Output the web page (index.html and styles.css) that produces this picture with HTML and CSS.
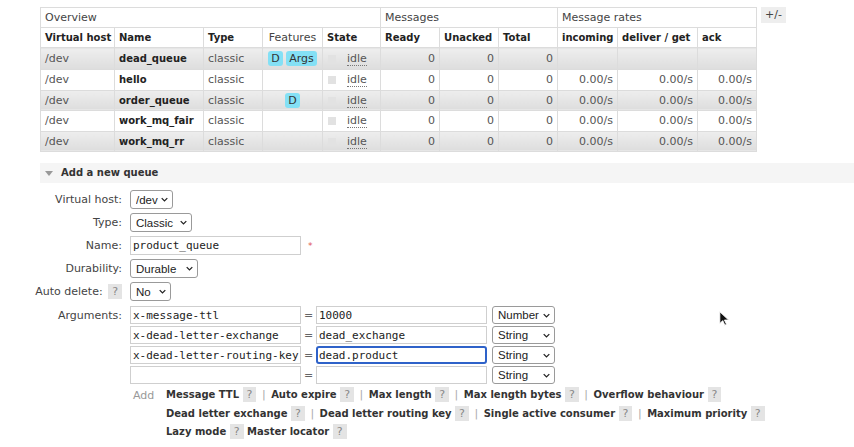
FILE: index.html
```html
<!DOCTYPE html>
<html>
<head>
<meta charset="utf-8">
<link rel="stylesheet" href="styles.css">
</head>
<body>
<div class="top">
  <table class="queues">
    <colgroup>
      <col style="width:74px"><col style="width:89px"><col style="width:59px"><col style="width:60px"><col style="width:58px">
      <col style="width:59px"><col style="width:59px"><col style="width:59px">
      <col style="width:60px"><col style="width:80px"><col style="width:59px">
    </colgroup>
    <thead>
      <tr class="group"><th colspan="5">Overview</th><th colspan="3">Messages</th><th colspan="3">Message rates</th></tr>
      <tr class="cols"><th>Virtual host</th><th>Name</th><th>Type</th><th class="feat-h">Features</th><th>State</th><th>Ready</th><th>Unacked</th><th>Total</th><th>incoming</th><th>deliver / get</th><th>ack</th></tr>
    </thead>
    <tbody>
      <tr class="alt tall"><td>/dev</td><td class="name">dead_queue</td><td>classic</td><td class="feat"><span class="badge">D</span> <span class="badge">Args</span></td><td class="state"><span class="box"></span><span class="idle">idle</span></td><td class="num">0</td><td class="num">0</td><td class="num">0</td><td></td><td></td><td></td></tr>
      <tr><td>/dev</td><td class="name">hello</td><td>classic</td><td class="feat"></td><td class="state"><span class="box"></span><span class="idle">idle</span></td><td class="num">0</td><td class="num">0</td><td class="num">0</td><td class="num">0.00/s</td><td class="num">0.00/s</td><td class="num">0.00/s</td></tr>
      <tr class="alt"><td>/dev</td><td class="name">order_queue</td><td>classic</td><td class="feat"><span class="badge">D</span></td><td class="state"><span class="box"></span><span class="idle">idle</span></td><td class="num">0</td><td class="num">0</td><td class="num">0</td><td class="num">0.00/s</td><td class="num">0.00/s</td><td class="num">0.00/s</td></tr>
      <tr><td>/dev</td><td class="name">work_mq_fair</td><td>classic</td><td class="feat"></td><td class="state"><span class="box"></span><span class="idle">idle</span></td><td class="num">0</td><td class="num">0</td><td class="num">0</td><td class="num">0.00/s</td><td class="num">0.00/s</td><td class="num">0.00/s</td></tr>
      <tr class="alt"><td>/dev</td><td class="name">work_mq_rr</td><td>classic</td><td class="feat"></td><td class="state"><span class="box"></span><span class="idle">idle</span></td><td class="num">0</td><td class="num">0</td><td class="num">0</td><td class="num">0.00/s</td><td class="num">0.00/s</td><td class="num">0.00/s</td></tr>
    </tbody>
  </table>
  <span class="toggle">+/-</span>
</div>

<div class="section-head"><span class="tri"></span>Add a new queue</div>

<form class="form">
  <label class="lbl">Virtual host:</label>
  <div class="ctl"><span class="sel w43"><select><option>/dev</option></select><svg class="chev" viewBox="0 0 10 6"><path d="M1 1l4 4 4-4" /></svg></span></div>

  <label class="lbl">Type:</label>
  <div class="ctl"><span class="sel w62"><select><option>Classic</option></select><svg class="chev" viewBox="0 0 10 6"><path d="M1 1l4 4 4-4" /></svg></span></div>

  <label class="lbl">Name:</label>
  <div class="ctl"><input class="txt wname" value="product_queue"><span class="req">*</span></div>

  <label class="lbl">Durability:</label>
  <div class="ctl"><span class="sel w68"><select><option>Durable</option></select><svg class="chev" viewBox="0 0 10 6"><path d="M1 1l4 4 4-4" /></svg></span></div>

  <label class="lbl">Auto delete: <span class="help">?</span></label>
  <div class="ctl"><span class="sel w41"><select><option>No</option></select><svg class="chev" viewBox="0 0 10 6"><path d="M1 1l4 4 4-4" /></svg></span></div>

  <label class="lbl args-lbl">Arguments:</label>
  <div class="args">
    <div class="arg"><input class="txt key" value="x-message-ttl"><span class="eq">=</span><input class="txt val" value="10000"><span class="sel w63"><select><option>Number</option></select><svg class="chev" viewBox="0 0 10 6"><path d="M1 1l4 4 4-4" /></svg></span></div>
    <div class="arg"><input class="txt key" value="x-dead-letter-exchange"><span class="eq">=</span><input class="txt val" value="dead_exchange"><span class="sel w63"><select><option>String</option></select><svg class="chev" viewBox="0 0 10 6"><path d="M1 1l4 4 4-4" /></svg></span></div>
    <div class="arg"><input class="txt key" value="x-dead-letter-routing-key"><span class="eq">=</span><input class="txt val focus" value="dead.product"><span class="sel w63"><select><option>String</option></select><svg class="chev" viewBox="0 0 10 6"><path d="M1 1l4 4 4-4" /></svg></span></div>
    <div class="arg"><input class="txt key" value=""><span class="eq">=</span><input class="txt val" value=""><span class="sel w63"><select><option>String</option></select><svg class="chev" viewBox="0 0 10 6"><path d="M1 1l4 4 4-4" /></svg></span></div>
    <div class="addrow">
      <span class="add">Add</span>
      <div class="links">
        <div class="line"><b>Message TTL</b> <span class="help">?</span> <span class="sep">|</span> <b>Auto expire</b> <span class="help">?</span> <span class="sep">|</span> <b>Max length</b> <span class="help">?</span> <span class="sep">|</span> <b>Max length bytes</b> <span class="help">?</span> <span class="sep">|</span> <b>Overflow behaviour</b> <span class="help">?</span></div>
        <div class="line"><b>Dead letter exchange</b> <span class="help">?</span> <span class="sep">|</span> <b>Dead letter routing key</b> <span class="help">?</span> <span class="sep">|</span> <b>Single active consumer</b> <span class="help">?</span> <span class="sep">|</span> <b>Maximum priority</b> <span class="help">?</span></div>
        <div class="line"><b>Lazy mode</b> <span class="help">?</span> <b>Master locator</b> <span class="help">?</span></div>
      </div>
    </div>
  </div>
</form>

<svg class="cursor" viewBox="0 0 12 18" width="10" height="15"><path d="M1 1v14l3.5-3.5 2.5 5.5 2-1-2.5-5.2h5z" fill="#111" stroke="#fff" stroke-width="1"/></svg>
</body>
</html>
```

FILE: styles.css
```css
html, body {
  margin: 0;
  padding: 0;
  background: #fff;
}
body {
  font-family: "DejaVu Sans", Verdana, sans-serif;
  font-size: 11px;
  color: #444;
  width: 854px;
  height: 447px;
  overflow: hidden;
  position: relative;
}

.top {
  display: flex;
  align-items: flex-start;
  gap: 4px;
  padding: 7px 0 0 40px;
}

.queues {
  border-collapse: collapse;
  table-layout: fixed;
  width: 716px;
}
.queues th, .queues td {
  border: 1px solid #dcdcdc;
  padding: 0 4px;
  height: 19px;
  text-align: left;
  white-space: nowrap;
  overflow: hidden;
}
.queues .group th {
  font-weight: normal;
  color: #444;
}
.queues .cols th {
  font-weight: bold;
  font-size: 10px;
  color: #222;
}
.queues .cols th.feat-h {
  font-weight: normal;
  font-size: 11px;
  color: #444;
  text-align: center;
}
.queues tbody td {
  color: #555;
  height: 19.5px;
}
.queues tr.tall td {
  height: 21px;
}
.queues tr.alt td {
  background: linear-gradient(#eeeeee, #dddddd);
}
.queues td.name {
  font-weight: bold;
  font-size: 10px;
  color: #222;
}
.queues td.num {
  text-align: right;
}
.queues td.feat {
  text-align: center;
}
.badge {
  display: inline-block;
  background: #84e0f5;
  border-radius: 3px;
  padding: 0 3px;
  line-height: 15px;
  color: #333;
}
.box {
  display: inline-block;
  width: 8px;
  height: 8px;
  background: #e2e2e2;
  vertical-align: -1px;
  margin: 0 11px 0 1px;
}
.idle {
  border-bottom: 1px dotted #777;
  color: #555;
}

.toggle {
  background: #eeeeee;
  color: #444;
  padding: 2px 4px;
  line-height: 12px;
}

.section-head {
  margin: 11px 0 0 40px;
  height: 20px;
  line-height: 20px;
  background: #f5f5f5;
  font-weight: bold;
  font-size: 10px;
  color: #333;
  display: flex;
  align-items: center;
}
.tri {
  width: 0;
  height: 0;
  border-left: 4px solid transparent;
  border-right: 4px solid transparent;
  border-top: 5px solid #999;
  margin: 0 8px 0 5px;
}

.form {
  display: grid;
  grid-template-columns: 122px auto;
  column-gap: 8px;
  row-gap: 4px;
  margin-top: 7px;
  align-items: center;
}
.lbl {
  text-align: right;
  color: #444;
  white-space: nowrap;
}
.args-lbl {
  align-self: start;
  line-height: 18px;
  margin-top: 2px;
}
.ctl {
  display: flex;
  align-items: center;
  height: 19px;
}

.help {
  display: inline-block;
  background: #e4e4e4;
  color: #888;
  font-weight: normal;
  font-size: 11px;
  padding: 0 4px;
  line-height: 15px;
}
.lbl .help {
  margin-left: 2px;
}

.sel {
  position: relative;
  display: inline-block;
  height: 19px;
}
.sel select {
  appearance: none;
  -webkit-appearance: none;
  box-sizing: border-box;
  height: 19px;
  width: 100%;
  border: 1px solid #9a9a9a;
  border-radius: 3px;
  background: #fff;
  font-family: "Liberation Sans", Arial, sans-serif;
  font-size: 11.5px;
  color: #222;
  padding: 0 0 0 5px;
  margin: 0;
}
.chev {
  position: absolute;
  right: 5px;
  top: 7px;
  width: 7px;
  height: 5px;
  fill: none;
  stroke: #222;
  stroke-width: 1.8;
  pointer-events: none;
}
.w41 { width: 41px; }
.w43 { width: 43px; }
.w62 { width: 62px; }
.w63 { width: 63px; }
.w68 { width: 68px; }

.txt {
  box-sizing: border-box;
  height: 19px;
  border: 1px solid #cfcfcf;
  background: #fff;
  font-family: "DejaVu Sans Mono", "Liberation Mono", monospace;
  font-size: 11px;
  color: #222;
  padding: 0 0 0 2px;
  margin: 0;
  outline: none;
}
.wname { width: 171px; }
.req {
  color: #e05555;
  font-size: 9px;
  margin-left: 7px;
}

.args {
  display: flex;
  flex-direction: column;
  gap: 2px;
  margin-top: 1px;
}
.arg {
  display: flex;
  align-items: center;
}
.arg .txt {
  height: 18px;
}
.key { width: 171px; }
.val { width: 171px; }
.eq {
  width: 15px;
  text-align: center;
  color: #666;
}
.arg .sel {
  margin-left: 5px;
  height: 18px;
}
.arg .sel select {
  height: 18px;
}
.arg .chev { top: 7px; }
.focus {
  border: 2px solid #2e62c9;
  border-radius: 3px;
  padding: 0 0 0 1px;
}

.addrow {
  display: flex;
  margin-top: 0;
}
.add {
  width: 36px;
  padding-left: 3px;
  box-sizing: border-box;
  color: #999;
  line-height: 19px;
}
.links {
  display: flex;
  flex-direction: column;
}
.line {
  line-height: 18.5px;
  white-space: nowrap;
  color: #333;
}
.line b {
  color: #333;
  font-size: 10px;
}
.sep {
  color: #aaa;
  margin: 0 2px;
}

.cursor {
  position: absolute;
  left: 719px;
  top: 311px;
}
```
